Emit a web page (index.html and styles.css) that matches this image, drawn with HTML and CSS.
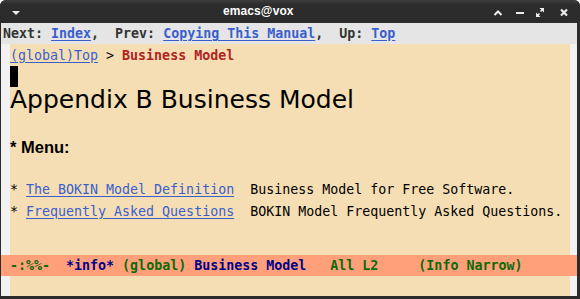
FILE: index.html
```html
<!DOCTYPE html>
<html lang="en">
<head>
    <meta charset="UTF-8">
    <title>emacs@vox</title>
    <link rel="stylesheet" href="styles.css">
</head>
<body>
<div class="window">
    <div class="titlebar">
        <svg class="menu-arrow" width="10" height="23" viewBox="0 0 10 23">
            <polygon points="1,11 9,11 5,15" fill="#e8e8e8"/>
        </svg>
        <span class="title">emacs@vox</span>
        <svg class="controls" width="84" height="23" viewBox="0 0 84 23">
            <!-- up, minimize, maximize, close -->
            <polyline points="4.5,15 8,11.5 11.5,15" fill="none" stroke="#eee" stroke-width="2"/>
            <rect x="26" y="12" width="8" height="2" fill="#eee"/>
            <polygon points="54,8 54,12.5 49.5,8" fill="#eee"/>
            <polygon points="46,17 46,12.5 50.5,17" fill="#eee"/>
            <line x1="52.5" y1="9.5" x2="50.5" y2="11.5" stroke="#eee" stroke-width="1.6"/>
            <line x1="47.5" y1="15.5" x2="49.5" y2="13.5" stroke="#eee" stroke-width="1.6"/>
            <line x1="71" y1="9.5" x2="77" y2="15.5" stroke="#eee" stroke-width="2.2"/>
            <line x1="77" y1="9.5" x2="71" y2="15.5" stroke="#eee" stroke-width="2.2"/>
        </svg>
    </div>
    <div class="frame">
        <div class="header-line"><span>Next: </span><a class="xref">Index</a>,  Prev: <a class="xref">Copying This Manual</a>,  Up: <a class="xref">Top</a></div>
        <div class="buffer">
            <div class="line"><a class="link">(global)Top</a> &gt; <span class="node">Business Model</span></div>
            <div class="line"><span class="cursor"></span></div>
            <h1 class="info-title">Appendix B Business Model</h1>
            <div class="menu-header">* Menu:</div>
            <div class="menu">
                <div class="menu-line">* <a class="link">The BOKIN Model Definition</a>  Business Model for Free Software.</div>
                <div class="menu-line">* <a class="link">Frequently Asked Questions</a>  BOKIN Model Frequently Asked Questions.</div>
            </div>
        </div>
        <div class="mode-line"><span class="green">-:%%-</span>  <span class="blue">*info*</span> <span class="green">(global)</span> <span class="blue">Business Model</span>   <span class="green">All L2</span>     <span class="green">(Info Narrow)</span></div>
        <div class="echo-area"></div>
    </div>
</div>
</body>
</html>
```

FILE: styles.css
```css
body {
    margin: 0;
    background-color: #ffffff;
}

.window {
    width: 580px;
    height: 299px;
    border-radius: 6px 6px 0 0;
    overflow: hidden;
    background-color: #2b2b2b;
    display: flex;
    flex-direction: column;
}

.titlebar {
    height: 23px;
    flex-shrink: 0;
    display: flex;
    align-items: center;
    background: linear-gradient(#3d3d3d, #2c2c2c 5px, #2b2b2b);
}

.menu-arrow {
    margin-left: 11px;
}

.title {
    flex: 1;
    padding-left: 202px;
    color: #ffffff;
    font-family: "Liberation Sans", Arial, sans-serif;
    font-weight: bold;
    font-size: 12px;
    line-height: 23px;
    letter-spacing: 0.1px;
}

.controls {
    margin-right: 6px;
}

.frame {
    flex: 1;
    display: flex;
    flex-direction: column;
    border-left: 1px solid #2b2b2b;
    border-right: 3px solid #2b2b2b;
    border-bottom: 3px solid #2b2b2b;
    font-family: "DejaVu Sans Mono", monospace;
    font-size: 13.3px;
    color: #000000;
}

.header-line {
    height: 21px;
    flex-shrink: 0;
    line-height: 21px;
    padding-left: 2px;
    background-color: #e5e5e5;
    color: #333333;
    font-weight: bold;
    white-space: pre;
}

.xref,
.link {
    color: #3a5fcd;
    text-decoration: underline;
    text-underline-offset: 2px;
}

.buffer {
    height: 210px;
    flex-shrink: 0;
    padding-top: 1px;
    background-color: #f5deb3;
    border-left: 9px solid #f2f2f2;
    border-right: 7px solid #f2f2f2;
}

.line {
    height: 21px;
    line-height: 21px;
    white-space: pre;
}

.node {
    color: #b22222;
    font-weight: bold;
}

.cursor {
    display: inline-block;
    width: 8px;
    height: 21px;
    background-color: #000000;
    vertical-align: top;
}

.info-title {
    margin: 0;
    font-family: "DejaVu Sans", sans-serif;
    font-weight: normal;
    font-size: 25px;
    line-height: 26px;
}

.menu-header {
    margin-top: 23px;
    font-family: "Liberation Sans", Arial, sans-serif;
    font-weight: bold;
    font-size: 16.5px;
    line-height: 22px;
}

.menu {
    margin-top: 21px;
}

.menu-line {
    line-height: 22px;
    white-space: pre;
}

.mode-line {
    height: 21px;
    flex-shrink: 0;
    line-height: 21px;
    padding-left: 9px;
    background-color: #ffa07a;
    font-weight: bold;
    white-space: pre;
}

.green {
    color: #0b6b0b;
}

.blue {
    color: #00008b;
}

.echo-area {
    flex: 1;
    background-color: #f5deb3;
    border-left: 9px solid #f2f2f2;
    border-right: 7px solid #f2f2f2;
}
```
